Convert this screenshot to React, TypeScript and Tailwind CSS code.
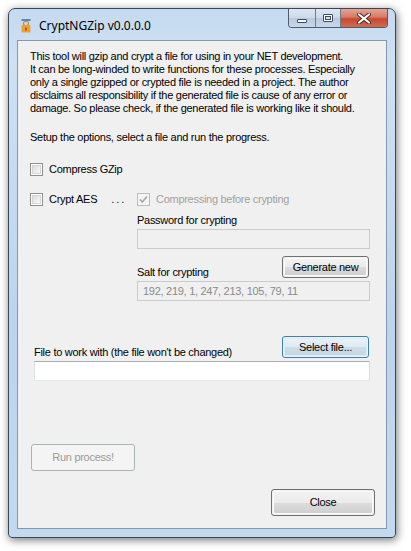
import React from "react";

function CheckBox({ checked = false, disabled = false }: { checked?: boolean; disabled?: boolean }) {
  return (
    <div
      className={
        "w-[13px] h-[13px] border flex items-center justify-center shrink-0 " +
        (disabled ? "border-[#bcbcbc] bg-[#f4f4f4]" : "border-[#8e8f8f] bg-white")
      }
    >
      {checked ? (
        <svg width="11" height="11" viewBox="0 0 11 11">
          <path d="M2 5.5 L4.3 8 L9 2.5" fill="none" stroke="#a6a6a6" strokeWidth="1.6" />
        </svg>
      ) : (
        <div className="w-[9px] h-[9px] border border-[#d6d6d6] bg-gradient-to-br from-[#dcdcdc] to-[#f9f9f9]" />
      )}
    </div>
  );
}

function TextBox({ value = "", disabled = false, className = "" }: { value?: string; disabled?: boolean; className?: string }) {
  return (
    <div
      className={
        "h-[20px] border flex items-center px-[5px] whitespace-nowrap " +
        (disabled
          ? "border-[#c9cbcf] bg-[#f0f0f0] text-[#8a8a8a]"
          : "border-t-[#abadb3] border-x-[#dbdfe6] border-b-[#e3e9ef] bg-white") +
        " " +
        className
      }
    >
      {value}
    </div>
  );
}

function Button({
  label,
  disabled = false,
  focused = false,
  className = "",
}: {
  label: string;
  disabled?: boolean;
  focused?: boolean;
  className?: string;
}) {
  if (disabled) {
    return (
      <div className={"border border-[#adb2b5] rounded-[3px] bg-[#f4f4f4] text-[#9a9a9a] flex items-center justify-center whitespace-nowrap " + className}>
        {label}
      </div>
    );
  }
  return (
    <div
      className={
        "border rounded-[3px] p-px " +
        (focused ? "border-[#3c7fb1] " : "border-[#707070] ") +
        className
      }
    >
      <div
        className={
          "w-full h-full rounded-[2px] flex items-center justify-center text-black whitespace-nowrap " +
          (focused
            ? "bg-[linear-gradient(#e8f1f8_0%,#dfe9f2_50%,#cfdde9_51%,#c6d6e4_100%)] border border-[#d9ecf9]"
            : "bg-[linear-gradient(#f2f2f2_0%,#ebebeb_50%,#dddddd_51%,#cfcfcf_100%)] border border-[#fbfbfb]")
        }
      >
        {label}
      </div>
    </div>
  );
}

function AppIcon() {
  return (
    <svg width="10" height="14" viewBox="0 0 10 14">
      <rect x="0.5" y="0" width="9" height="2" fill="#5b86b8" />
      <rect x="2.5" y="2.5" width="5" height="4" rx="2" fill="none" stroke="#c08a3a" strokeWidth="1.2" />
      <rect x="0.5" y="6" width="9" height="7.5" rx="1" fill="#f0a030" />
      <rect x="4.3" y="8.5" width="1.4" height="3" fill="#8a4a10" />
    </svg>
  );
}

export default function App() {
  return (
    <div
      className="w-[411px] h-[551px] bg-white overflow-hidden pt-[8px] pl-[8px]"
      style={{ fontFamily: "'Liberation Sans', Arial, sans-serif" }}
    >
      <div className="w-[388px] h-[530px] rounded-t-[7px] rounded-b-[4px] border border-[#3a4756] bg-[linear-gradient(#c5daf0_0%,#cfe1f3_10%,#bcd4ec_60%,#c3d9ef_100%)] shadow-[1px_2px_9px_rgba(0,0,0,0.55)] flex flex-col">
        {/* title bar */}
        <div className="h-[31px] flex items-start shrink-0">
          <div className="ml-[12px] mt-[10px]">
            <AppIcon />
          </div>
          <div
            className="ml-[8px] mt-[9px] text-[12px] text-black leading-[16px]"
            style={{ fontFamily: "'Noto Sans', 'Open Sans', sans-serif" }}
          >
            CryptNGZip v0.0.0.0
          </div>
          <div className="ml-auto mr-[7px] flex h-[19px] rounded-b-[4px] border border-t-0 border-[#4e5c6e] overflow-hidden">
            <div className="w-[27px] h-full bg-[linear-gradient(#dde7f2_0%,#cbd9e8_50%,#b8cade_51%,#c8d8ea_100%)] border-r border-[#6d7b8c] flex items-center justify-center">
              <div className="w-[10px] h-[4px] mt-[5px] border border-[#3c4a5a] bg-white rounded-[1px]" />
            </div>
            <div className="w-[25px] h-full bg-[linear-gradient(#dde7f2_0%,#cbd9e8_50%,#b8cade_51%,#c8d8ea_100%)] border-r border-[#6d7b8c] flex items-center justify-center">
              <div className="w-[10px] h-[8px] border border-[#3c4a5a] bg-white rounded-[1px] flex items-center justify-center">
                <div className="w-[6px] h-[4px] border border-[#3c4a5a] bg-[#dfe8f1]" />
              </div>
            </div>
            <div className="w-[46px] h-full bg-[linear-gradient(#e4a494_0%,#d77a64_45%,#c74a31_55%,#d26a4e_100%)] flex items-center justify-center">
              <svg width="14" height="11" viewBox="0 0 14 11">
                <path d="M2 1.5 L12 9.5 M12 1.5 L2 9.5" stroke="#4a2a22" strokeWidth="4" strokeLinecap="round" />
                <path d="M2 1.5 L12 9.5 M12 1.5 L2 9.5" stroke="#ffffff" strokeWidth="2.2" strokeLinecap="round" />
              </svg>
            </div>
          </div>
        </div>

        {/* client area */}
        <div className="mx-[8px] mb-[8px] flex-1 border border-[#8497ad] bg-[#f0f0f0] text-[11px] tracking-[-0.28px] text-black flex flex-col">
          <div className="pl-[12px] pt-[9px] leading-[13px] whitespace-nowrap">
            <div>This tool will gzip and crypt a file for using in your NET development.</div>
            <div>It can be long-winded to write functions for these processes. Especially</div>
            <div>only a single gzipped or crypted file is needed in a project. The author</div>
            <div>disclaims all responsibility if the generated file is cause of any error or</div>
            <div>damage. So please check, if the generated file is working like it should.</div>
            <div className="mt-[16px]">Setup the options, select a file and run the progress.</div>
          </div>

          {/* Compress GZip */}
          <div className="ml-[12px] mt-[19px] h-[13px] flex items-center leading-[13px]">
            <CheckBox />
            <span className="ml-[6px]">Compress GZip</span>
          </div>

          {/* Crypt AES */}
          <div className="mt-[17px] flex">
            <div className="ml-[12px] w-[107px] h-[13px] flex items-center leading-[13px]">
              <CheckBox />
              <span className="ml-[6px]">Crypt AES</span>
              <span className="ml-[14px] tracking-[2px]">...</span>
            </div>
            <div className="w-[233px] flex flex-col leading-[13px]">
              <div className="h-[13px] flex items-center">
                <CheckBox checked disabled />
                <span className="ml-[6px] text-[#a0a0a0]">Compressing before crypting</span>
              </div>
              <div className="mt-[8px]">Password for crypting</div>
              <TextBox disabled className="mt-[2px]" />
              <div className="mt-[7px] h-[23px] flex justify-between">
                <span className="self-end">Salt for crypting</span>
                <Button label="Generate new" className="w-[87px] h-[22px] mr-px" />
              </div>
              <TextBox disabled value="192, 219, 1, 247, 213, 105, 79, 11" className="mt-[2px]" />
            </div>
          </div>

          {/* File */}
          <div className="mt-[35px] ml-[16px] w-[336px] flex flex-col leading-[13px]">
            <div className="h-[23px] flex justify-between">
              <span className="self-end">File to work with (the file won't be changed)</span>
              <Button label="Select file..." focused className="w-[87px] h-[22px] mr-px" />
            </div>
            <TextBox className="mt-[2px]" />
          </div>

          {/* Run process */}
          <Button label="Run process!" disabled className="ml-[13px] mt-[63px] w-[104px] h-[27px]" />

          {/* Close */}
          <div className="mt-[18px] flex justify-end pr-[11px]">
            <Button label="Close" className="w-[104px] h-[27px]" />
          </div>
        </div>
      </div>
    </div>
  );
}
